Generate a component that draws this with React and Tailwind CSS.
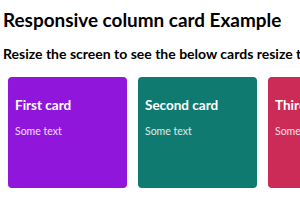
export default function App() {
  const cards = [
    { title: "First card", bg: "bg-[#9116dc]" },
    { title: "Second card", bg: "bg-[#0f7a70]" },
    { title: "Third card", bg: "bg-[#cc2a57]" },
  ];
  return (
    <div className="w-[300px] h-[210px] overflow-hidden bg-white" style={{ fontFamily: 'Lato, "Noto Sans", sans-serif' }}>
      <h2 className="pl-[3px] pt-[7px] text-[18.9px] leading-[26px] font-bold text-black whitespace-nowrap">Responsive column card Example</h2>
      <p className="pl-[3px] mt-[12px] text-[14px] leading-[18px] font-bold text-black whitespace-nowrap">Resize the screen to see the below cards resize themselves.</p>
      <div className="flex gap-[11px] pl-[8px] mt-[14px]">
        {cards.map((c) => (
          <div key={c.title} className={`${c.bg} w-[119px] h-[111px] shrink-0 rounded-[4px] px-[7px] pt-[20px] text-white`}>
            <h3 className="text-[13.5px] leading-[16px] font-bold whitespace-nowrap">{c.title}</h3>
            <p className="mt-[12px] text-[10.5px] leading-[13px] text-white/85">Some text</p>
          </div>
        ))}
      </div>
    </div>
  );
}
